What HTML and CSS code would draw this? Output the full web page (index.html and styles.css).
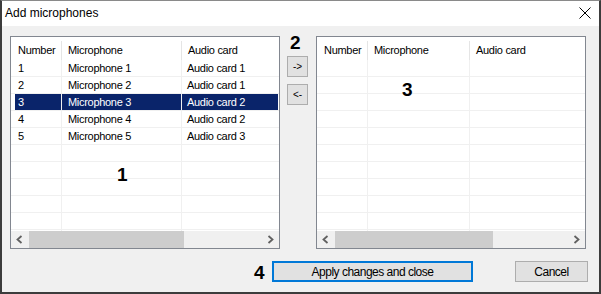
FILE: index.html
```html
<!DOCTYPE html>
<html lang="en">
<head>
    <meta charset="UTF-8">
    <title>Add microphones</title>
    <link rel="stylesheet" href="styles.css">
</head>
<body>

<div class="window">
    <div class="titlebar">
        <span class="title">Add microphones</span>
        <svg class="close" width="12" height="12" viewBox="0 0 12 12">
            <path d="M0.5 0.5 L11.5 11.5 M11.5 0.5 L0.5 11.5" stroke="#000" stroke-width="1" fill="none"/>
        </svg>
    </div>

    <div class="content">
        <div class="lists">
            <div class="listview">
                <div class="lv-head">
                    <div class="hcol c1">Number</div>
                    <div class="hcol c2">Microphone</div>
                    <div class="hcol c3">Audio card</div>
                </div>
                <div class="lv-body">
                    <div class="lv-row"><div class="cell c1">1</div><div class="cell c2">Microphone 1</div><div class="cell c3">Audio card 1</div></div>
                    <div class="lv-row"><div class="cell c1">2</div><div class="cell c2">Microphone 2</div><div class="cell c3">Audio card 1</div></div>
                    <div class="lv-row selected"><div class="cell c1">3</div><div class="cell c2">Microphone 3</div><div class="cell c3">Audio card 2</div></div>
                    <div class="lv-row"><div class="cell c1">4</div><div class="cell c2">Microphone 4</div><div class="cell c3">Audio card 2</div></div>
                    <div class="lv-row"><div class="cell c1">5</div><div class="cell c2">Microphone 5</div><div class="cell c3">Audio card 3</div></div>
                    <div class="lv-row"><div class="cell c1"></div><div class="cell c2"></div><div class="cell c3"></div></div>
                    <div class="lv-row"><div class="cell c1"></div><div class="cell c2"></div><div class="cell c3"></div></div>
                    <div class="lv-row"><div class="cell c1"></div><div class="cell c2"></div><div class="cell c3"></div></div>
                    <div class="lv-row"><div class="cell c1"></div><div class="cell c2"></div><div class="cell c3"></div></div>
                    <div class="lv-row"><div class="cell c1"></div><div class="cell c2"></div><div class="cell c3"></div></div>
                    <div class="lv-row"><div class="cell c1"></div><div class="cell c2"></div><div class="cell c3"></div></div>
                </div>
                <div class="hscroll">
                    <div class="arrow">
                        <svg width="7" height="9" viewBox="0 0 7 9"><polyline points="5.5,1 1.5,4.5 5.5,8" stroke="#606060" stroke-width="1.8" fill="none"/></svg>
                    </div>
                    <div class="thumb"></div>
                    <div class="track"></div>
                    <div class="arrow">
                        <svg width="7" height="9" viewBox="0 0 7 9"><polyline points="1.5,1 5.5,4.5 1.5,8" stroke="#606060" stroke-width="1.8" fill="none"/></svg>
                    </div>
                </div>
            </div>

            <div class="movers">
                <button class="move">-&gt;</button>
                <button class="move">&lt;-</button>
            </div>

            <div class="listview target">
                <div class="lv-head">
                    <div class="hcol c1">Number</div>
                    <div class="hcol c2">Microphone</div>
                    <div class="hcol c3">Audio card</div>
                </div>
                <div class="lv-body">
                    <div class="lv-row"><div class="cell c1"></div><div class="cell c2"></div><div class="cell c3"></div></div>
                    <div class="lv-row"><div class="cell c1"></div><div class="cell c2"></div><div class="cell c3"></div></div>
                    <div class="lv-row"><div class="cell c1"></div><div class="cell c2"></div><div class="cell c3"></div></div>
                    <div class="lv-row"><div class="cell c1"></div><div class="cell c2"></div><div class="cell c3"></div></div>
                    <div class="lv-row"><div class="cell c1"></div><div class="cell c2"></div><div class="cell c3"></div></div>
                    <div class="lv-row"><div class="cell c1"></div><div class="cell c2"></div><div class="cell c3"></div></div>
                    <div class="lv-row"><div class="cell c1"></div><div class="cell c2"></div><div class="cell c3"></div></div>
                    <div class="lv-row"><div class="cell c1"></div><div class="cell c2"></div><div class="cell c3"></div></div>
                    <div class="lv-row"><div class="cell c1"></div><div class="cell c2"></div><div class="cell c3"></div></div>
                    <div class="lv-row"><div class="cell c1"></div><div class="cell c2"></div><div class="cell c3"></div></div>
                    <div class="lv-row"><div class="cell c1"></div><div class="cell c2"></div><div class="cell c3"></div></div>
                </div>
                <div class="hscroll">
                    <div class="arrow">
                        <svg width="7" height="9" viewBox="0 0 7 9"><polyline points="5.5,1 1.5,4.5 5.5,8" stroke="#606060" stroke-width="1.8" fill="none"/></svg>
                    </div>
                    <div class="thumb"></div>
                    <div class="track"></div>
                    <div class="arrow">
                        <svg width="7" height="9" viewBox="0 0 7 9"><polyline points="1.5,1 5.5,4.5 1.5,8" stroke="#606060" stroke-width="1.8" fill="none"/></svg>
                    </div>
                </div>
            </div>
        </div>

        <div class="footer">
            <button class="btn default">Apply changes and close</button>
            <button class="btn cancel">Cancel</button>
        </div>
    </div>

    <!-- callout numbers drawn over the dialog -->
    <span class="marker m1">1</span>
    <span class="marker m2">2</span>
    <span class="marker m3">3</span>
    <span class="marker m4">4</span>
</div>

</body>
</html>
```

FILE: styles.css
```css
* {
    box-sizing: border-box;
}

body {
    margin: 0;
    padding: 0;
    background-color: #f0f0f0;
    font-family: "Liberation Sans", Arial, sans-serif;
}

.window {
    position: relative;
    width: 601px;
    height: 294px;
    border-top: 1px solid #8a8a8a;
    border-left: 2px solid #3c3c3c;
    border-right: 2px solid #3c3c3c;
    border-bottom: 2px solid #3c3c3c;
    background-color: #f0f0f0;
    display: flex;
    flex-direction: column;
}

.titlebar {
    height: 25px;
    background-color: #fff;
    display: flex;
    align-items: center;
    padding-left: 3px;
}

.title {
    font-size: 12px;
    line-height: 25px;
    color: #000;
}

.close {
    margin-left: auto;
    margin-right: 8px;
    margin-top: -1px;
}

.content {
    flex: 1;
    padding: 10px 0 0 8px;
}

.lists {
    display: flex;
    height: 213px;
}

/* list view */

.listview {
    width: 270px;
    height: 213px;
    border: 1px solid #828790;
    background-color: #fff;
    display: flex;
    flex-direction: column;
    font-family: "Liberation Sans", Arial, sans-serif;
    font-size: 11px;
    letter-spacing: -0.3px;
    color: #000;
}

.lv-head {
    display: flex;
    height: 23px;
    padding-top: 4px;
    line-height: 18px;
}

.hcol {
    border-right: 1px solid #e5e5e5;
    padding-left: 6px;
    white-space: nowrap;
}

.hcol.c1 {
    width: 51px;
    padding-left: 7px;
}

.hcol.c2 {
    width: 120px;
}

.hcol.c3 {
    flex: 1;
    border-right: none;
}

.lv-body {
    flex: 1;
    overflow: hidden;
}

.lv-row {
    display: flex;
    height: 17px;
    padding-left: 4px;
    border-bottom: 1px solid #f0f0f0;
    line-height: 16px;
}

.cell {
    border-right: 1px solid #f0f0f0;
    padding-left: 6px;
    white-space: nowrap;
}

.cell.c1 {
    width: 47px;
    padding-left: 3px;
}

.cell.c2 {
    width: 120px;
}

.cell.c3 {
    flex: 1;
    padding-left: 5px;
    border-right: none;
    margin-right: 1px;
}

.lv-row.selected .cell {
    background-color: #0a246a;
    color: #fff;
}

.target .hcol.c2,
.target .cell.c2 {
    width: 102px;
}

.hscroll {
    display: flex;
    height: 17px;
    background-color: #f0f0f0;
}

.hscroll .arrow {
    width: 17px;
    display: flex;
    align-items: center;
    justify-content: center;
}

.hscroll .thumb {
    width: 155px;
    margin-left: 1px;
    background-color: #cdcdcd;
}

.target .hscroll .thumb {
    width: 158px;
}

.hscroll .track {
    flex: 1;
}

/* move buttons */

.movers {
    width: 36px;
    display: flex;
    flex-direction: column;
    align-items: flex-start;
    gap: 7px;
    padding: 20px 0 0 7px;
}

.move {
    width: 21px;
    height: 21px;
    padding: 0;
    border: 1px solid #adadad;
    background-color: #e1e1e1;
    font-family: "Liberation Sans", Arial, sans-serif;
    font-size: 10px;
    line-height: 18px;
    color: #000;
}

/* bottom buttons */

.footer {
    display: flex;
    justify-content: flex-end;
    gap: 42px;
    margin-top: 12px;
    padding-right: 11px;
}

.btn {
    height: 21px;
    padding: 0;
    border: 1px solid #adadad;
    background-color: #e1e1e1;
    font-family: "Liberation Sans", Arial, sans-serif;
    font-size: 12px;
    letter-spacing: -0.5px;
    color: #000;
}

.btn.default {
    width: 201px;
    border: 2px solid #0078d7;
}

.btn.cancel {
    width: 73px;
}

/* callouts */

.marker {
    position: absolute;
    font-family: "Liberation Sans", Arial, sans-serif;
    font-weight: bold;
    font-size: 19px;
    line-height: 19px;
    color: #000;
}

.m1 { left: 115px; top: 164px; }
.m2 { left: 288px; top: 32px; }
.m3 { left: 400px; top: 79px; }
.m4 { left: 252px; top: 262px; }
```
